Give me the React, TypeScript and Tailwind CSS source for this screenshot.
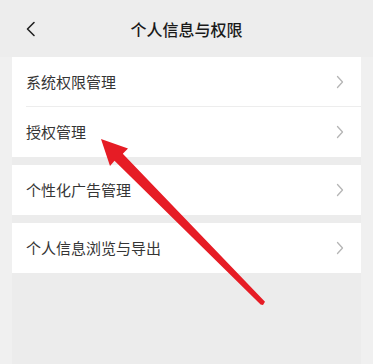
import { ReactNode } from "react";

function Chevron() {
  return (
    <svg width="8" height="14" viewBox="0 0 8 14" fill="none" className="shrink-0">
      <path d="M1.5 1.5 L6.5 7 L1.5 12.5" stroke="#b5b5b5" strokeWidth="1.3" strokeLinecap="round" strokeLinejoin="round" />
    </svg>
  );
}

function Row({ children, divider }: { children: ReactNode; divider?: boolean }) {
  return (
    <div className="relative flex h-[50px] items-center justify-between pl-[14px] pr-[17px]">
      <span className="text-[15px] text-[#353535]">{children}</span>
      <Chevron />
      {divider && <div className="absolute bottom-0 left-[14px] right-0 h-px bg-[#ededed]" />}
    </div>
  );
}

export default function App() {
  return (
    <div
      className="relative h-[364px] w-[373px] overflow-hidden bg-[#f0f0f0]"
      style={{ fontFamily: '"Noto Sans CJK SC", "Noto Sans", sans-serif' }}
    >
      <header className="relative flex h-[57px] items-center justify-center bg-[#ededed]">
        <svg width="12" height="16" viewBox="0 0 12 16" fill="none" className="absolute left-[25px] top-[21px]">
          <path d="M9 1.5 L2.5 8 L9 14.5" stroke="#222222" strokeWidth="1.6" strokeLinecap="round" strokeLinejoin="round" />
        </svg>
        <h1 className="text-[16px] font-medium text-[#1a1a1a]">个人信息与权限</h1>
      </header>

      <main className="mx-3 flex h-[307px] flex-col gap-2 bg-[#ececec]">
        <div className="bg-white">
          <Row divider>系统权限管理</Row>
          <Row>授权管理</Row>
        </div>
        <div className="bg-white">
          <Row>个性化广告管理</Row>
        </div>
        <div className="bg-white">
          <Row>个人信息浏览与导出</Row>
        </div>
      </main>

      <svg className="pointer-events-none absolute inset-0" width="373" height="364" viewBox="0 0 373 364">
        <polygon
          points="101,139 128,148.5 122.8,153.8 265,301.8 263,305 260.6,304.6 114.5,160.8 110,166"
          fill="#e61c25"
          strokeLinejoin="round"
        />
      </svg>
    </div>
  );
}
